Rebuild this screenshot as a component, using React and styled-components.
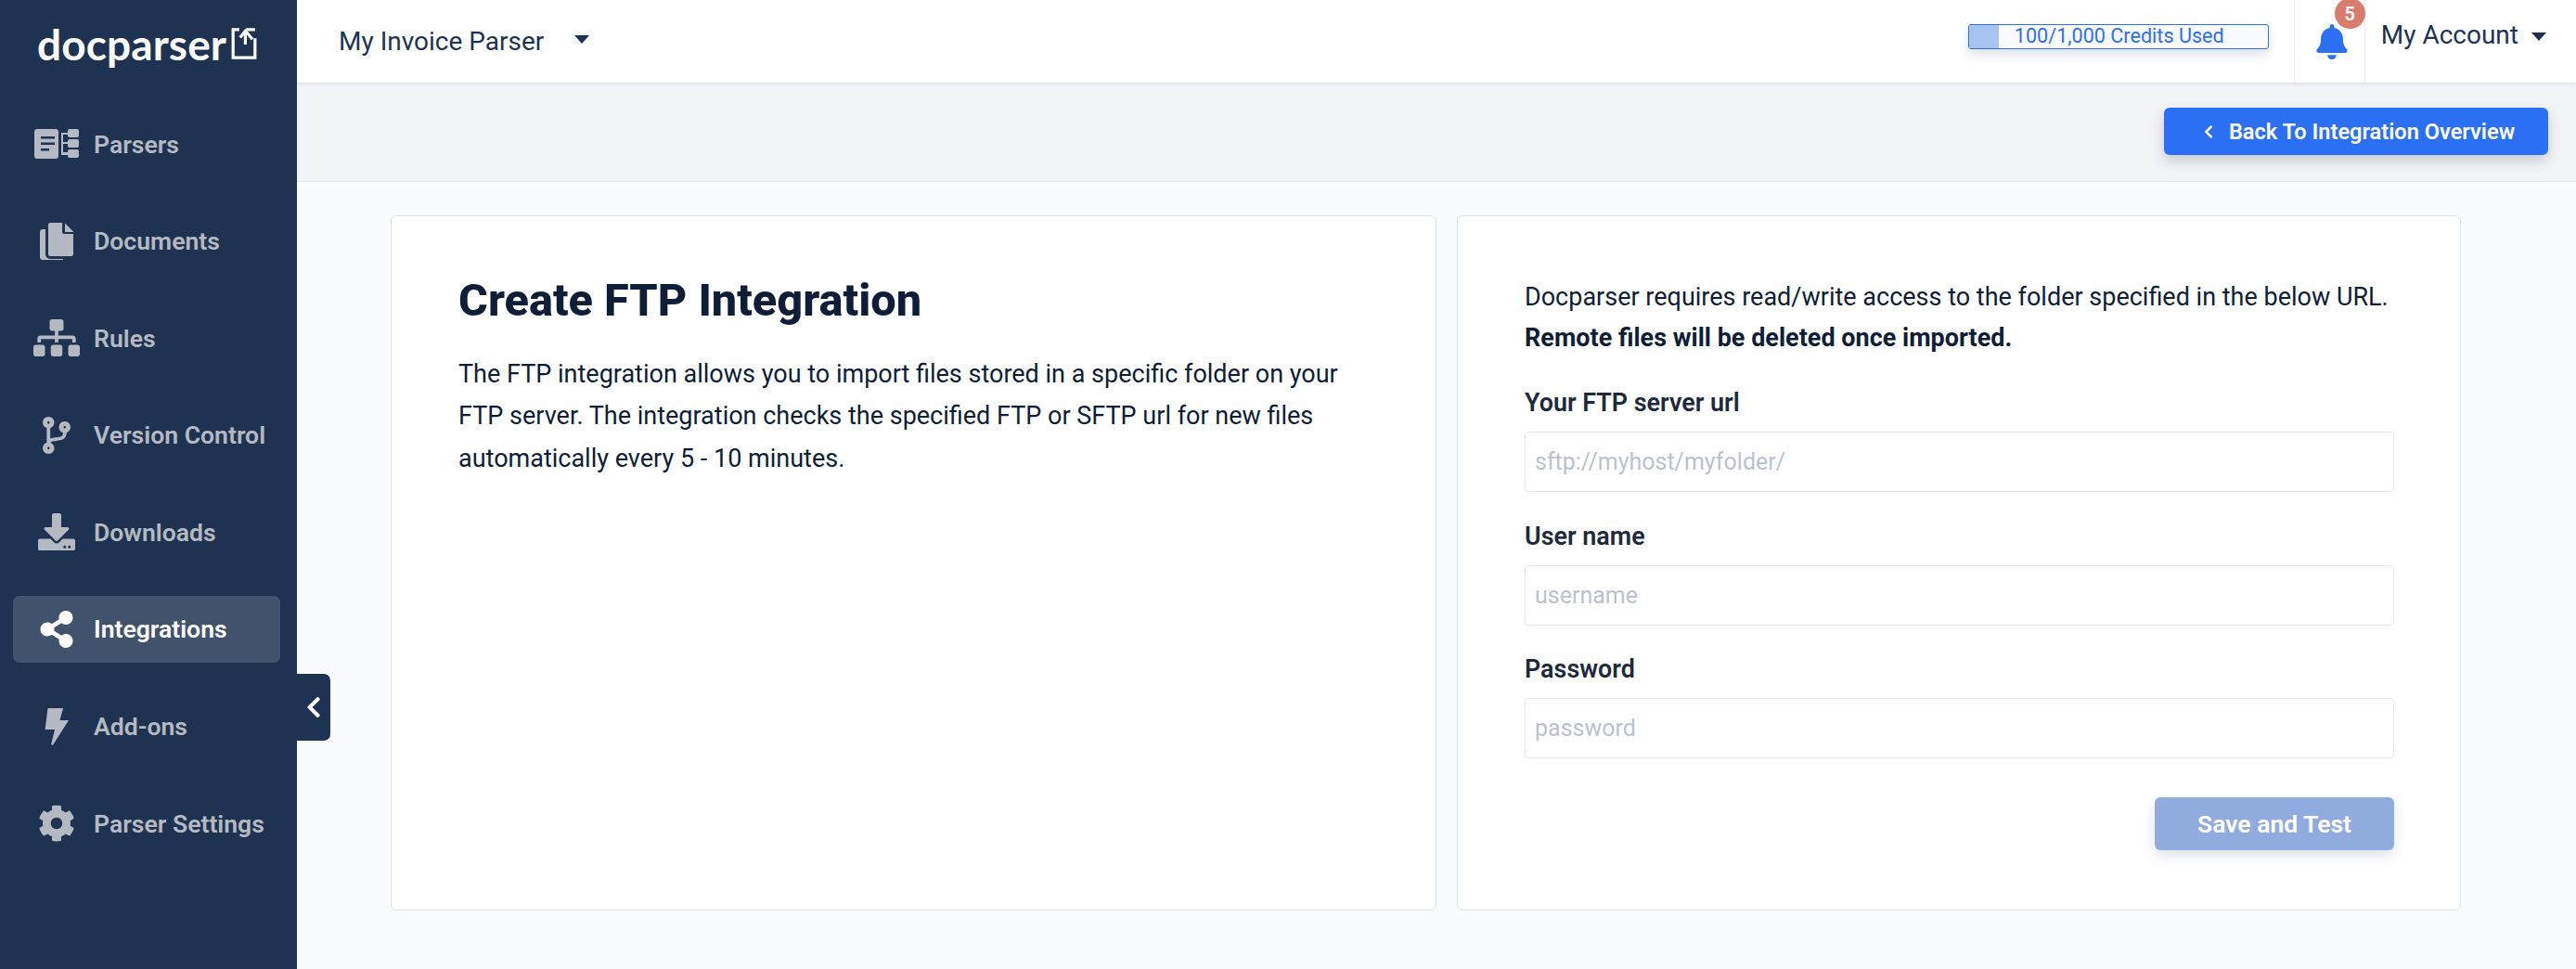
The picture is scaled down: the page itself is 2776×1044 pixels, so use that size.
import React from "react";
import styled, { createGlobalStyle } from "styled-components";
import {
  FaBell,
  FaChevronLeft,
  FaCodeBranch,
  FaCog,
  FaDownload,
  FaShareAlt,
  FaSitemap,
} from "react-icons/fa";

const GlobalStyle = createGlobalStyle`
  html, body {
    margin: 0;
    padding: 0;
    background: #fafbff;
    font-family: Roboto, "Liberation Sans", sans-serif;
    color: #0f1d36;
  }
  * { box-sizing: border-box; }
`;

const Page = styled.div`
  display: grid;
  grid-template-columns: 320px 1fr;
  width: 2776px;
  height: 1044px;
  overflow: hidden;
`;

const Sidebar = styled.aside`
  position: relative;
  background: #1e3352;
  display: flex;
  flex-direction: column;
  height: 1044px;
`;

const Brand = styled.div`
  height: 119px;
  display: flex;
  align-items: flex-start;
  padding: 18px 0 0 40px;
  gap: 5px;
  color: #fff;
`;

const BrandName = styled.span`
  font-family: Lato, sans-serif;
  font-size: 46px;
  line-height: 60px;
  font-weight: 700;
  letter-spacing: 0.1px;
`;

const BrandMark = styled.svg`
  width: 28px;
  height: 34px;
  margin-top: 12px;
  flex: none;
`;

const Nav = styled.nav`
  display: flex;
  flex-direction: column;
  gap: 32.6px;
  padding: 0 18px 0 14px;
`;

const NavItem = styled.a`
  height: 72px;
  display: flex;
  align-items: center;
  gap: 15px;
  padding-left: 22px;
  border-radius: 7px;
  font-size: 26.6px;
  font-weight: 600;
  color: ${(p) => (p.$active ? "#ffffff" : "#b4b9c2")};
  background: ${(p) => (p.$active ? "#41526d" : "transparent")};
`;

const NavIcon = styled.span`
  width: 50px;
  height: 44px;
  display: flex;
  align-items: center;
  justify-content: center;
  font-size: ${(p) => p.$size || 40}px;
  flex: none;
`;

const CollapseTab = styled.button`
  position: absolute;
  left: 320px;
  top: 726px;
  width: 36px;
  height: 72px;
  border: 0;
  padding: 0;
  background: #1e3352;
  color: #fff;
  border-radius: 0 7px 7px 0;
  display: flex;
  align-items: center;
  justify-content: center;
  font-size: 26px;
`;

const Main = styled.main`
  display: flex;
  flex-direction: column;
  min-width: 0;
`;

const TopBar = styled.header`
  position: relative;
  z-index: 1;
  height: 89px;
  flex: none;
  background: #fff;
  box-shadow: 0 1px 4px rgba(30, 51, 82, 0.14);
  display: flex;
  align-items: stretch;
  padding: 0 32px 0 45px;
`;

const ParserSelect = styled.div`
  display: flex;
  align-items: center;
  gap: 33px;
  font-size: 28px;
  color: #1e3352;
`;

const Caret = styled.span`
  width: 0;
  height: 0;
  border-left: 8.5px solid transparent;
  border-right: 8.5px solid transparent;
  border-top: 9px solid #1e3352;
  margin-top: -4px;
`;

const AccountCaret = styled(Caret)`
  margin-top: 3px;
`;

const TopRight = styled.div`
  margin-left: auto;
  display: flex;
  align-items: stretch;
`;

const Credits = styled.div`
  position: relative;
  align-self: center;
  width: 324px;
  height: 27px;
  margin: -11px 27px 0 0;
  border: 1px solid #2b6ff5;
  border-radius: 3px;
  background: #fafbff;
  box-shadow: 0 6px 12px rgba(30, 51, 82, 0.14);
  color: #2b6ff5;
  font-size: 21.6px;
  line-height: 24px;
  text-align: center;
  overflow: hidden;
`;

const CreditsFill = styled.div`
  position: absolute;
  left: 0;
  top: 0;
  bottom: 0;
  background: #a6c4ef;
`;

const CreditsLabel = styled.span`
  position: relative;
  left: 1px;
`;

const BellCell = styled.div`
  position: relative;
  width: 77px;
  border-left: 1px solid #e9ebef;
  border-right: 1px solid #e9ebef;
  display: flex;
  align-items: center;
  justify-content: center;
  color: #2b6ff5;
  font-size: 38px;
  padding: 0 0 0 6px;
`;

const Badge = styled.span`
  position: absolute;
  left: 43px;
  top: -2px;
  width: 33px;
  height: 33px;
  border-radius: 50%;
  background: #d87c6d;
  color: #fff;
  font-size: 20px;
  font-weight: 600;
  display: flex;
  align-items: center;
  justify-content: center;
`;

const Account = styled.div`
  display: flex;
  align-items: center;
  gap: 14px;
  padding: 0 0 14px 17px;
  font-size: 28px;
  color: #1e3352;
`;

const SubHeader = styled.div`
  height: 107px;
  flex: none;
  background: #f3f4f8;
  border-bottom: 1px solid #e2e3e8;
  display: flex;
  align-items: flex-start;
  justify-content: flex-end;
  padding: 27px 30px 0 0;
`;

const BackButton = styled.button`
  height: 51px;
  width: 414px;
  border: 0;
  border-radius: 6px;
  background: #2b6ff5;
  color: #fff;
  font: 600 23.6px Roboto, sans-serif;
  box-shadow: 0 6px 14px rgba(30, 51, 82, 0.22);
  display: flex;
  align-items: center;
  justify-content: center;
  gap: 14px;
  padding: 0 0 0 4px;
`;

const BackIcon = styled(FaChevronLeft)`
  font-size: 16px;
`;

const Content = styled.div`
  display: grid;
  grid-template-columns: 1127px 1082px;
  gap: 22px;
  padding: 36px 0 0 101px;
`;

const Card = styled.section`
  height: 749px;
  background: #fff;
  border: 1px solid #dfe1ea;
  border-radius: 6px;
  padding: ${(p) => p.$padding};
`;

const Title = styled.h1`
  margin: 0 0 28px;
  font-size: 48.7px;
  line-height: 58px;
  font-weight: 800;
  color: #0f1d36;
`;

const Body = styled.p`
  margin: 0;
  font-size: 27px;
  line-height: 45.3px;
  color: #0f1d36;
`;

const Intro = styled.p`
  margin: 0 0 31px;
  font-size: 27px;
  line-height: 44px;
  color: #0f1d36;
`;

const Field = styled.div`
  margin-bottom: 30.5px;
`;

const Label = styled.label`
  display: block;
  font-size: 26.9px;
  line-height: 34px;
  font-weight: 600;
  color: #1e2a3c;
  margin-bottom: 14px;
`;

const Input = styled.input`
  display: block;
  width: 100%;
  height: 65px;
  border: 1px solid #e8e9f0;
  border-radius: 4px;
  padding: 0 10px;
  background: #fff;
  font: 400 25px Roboto, sans-serif;
  &::placeholder {
    color: #bcc1d0;
    opacity: 1;
  }
`;

const Actions = styled.div`
  display: flex;
  justify-content: flex-end;
  margin-top: 42px;
`;

const SaveButton = styled.button`
  width: 258px;
  height: 57px;
  border: 0;
  border-radius: 6px;
  background: #90acdf;
  color: #fff;
  font: 600 26.5px Roboto, sans-serif;
  box-shadow: 0 6px 14px rgba(30, 51, 82, 0.14);
`;

const ParsersIcon = () => (
  <svg width="48" height="32" viewBox="0 0 48 32" fill="currentColor">
    <path
      fillRule="evenodd"
      d="M3 0h20a3 3 0 0 1 3 3v26a3 3 0 0 1-3 3H3a3 3 0 0 1-3-3V3a3 3 0 0 1 3-3Zm4 8v2.5h15V8Zm0 6.5V17h15v-2.5Zm0 6.5v2.5h9V21Z"
    />
    <path d="M38 0h8a2 2 0 0 1 2 2v5a2 2 0 0 1-2 2h-8a2 2 0 0 1-2-2V6h-5v8h5v-1a2 2 0 0 1 2-2h8a2 2 0 0 1 2 2v5a2 2 0 0 1-2 2h-8a2 2 0 0 1-2-2v-2h-5v9h5v-1a2 2 0 0 1 2-2h8a2 2 0 0 1 2 2v5a2 2 0 0 1-2 2h-8a2 2 0 0 1-2-2v-1h-7V4h7V2a2 2 0 0 1 2-2Z" />
  </svg>
);

const DocumentsIcon = () => (
  <svg width="36" height="40" viewBox="0 0 36 40" fill="currentColor">
    <path d="M11 0h13v10a2 2 0 0 0 2 2h10v22a2 2 0 0 1-2 2H11a2 2 0 0 1-2-2V2a2 2 0 0 1 2-2Z" />
    <path d="M27 0.5 35.5 9a1 1 0 0 1 .5 1h-9Z" />
    <path d="M6 7v27a5 5 0 0 0 5 5h14v1H3a3 3 0 0 1-3-3V10a3 3 0 0 1 3-3Z" />
  </svg>
);

const BoltIcon = () => (
  <svg width="26" height="40" viewBox="0 0 26 40" fill="currentColor">
    <path d="M3.5 0H20l-3.5 13H26L9.5 39c-.7 1.2-2.5.7-2.2-.8L11 23H.6Z" />
  </svg>
);

const navItems = [
  { label: "Parsers", icon: <ParsersIcon /> },
  { label: "Documents", icon: <DocumentsIcon /> },
  { label: "Rules", icon: <FaSitemap />, size: 50 },
  { label: "Version Control", icon: <FaCodeBranch />, size: 40 },
  { label: "Downloads", icon: <FaDownload />, size: 40 },
  { label: "Integrations", icon: <FaShareAlt />, size: 40, active: true },
  { label: "Add-ons", icon: <BoltIcon /> },
  { label: "Parser Settings", icon: <FaCog />, size: 40 },
];

const fields = [
  { label: "Your FTP server url", placeholder: "sftp://myhost/myfolder/" },
  { label: "User name", placeholder: "username" },
  { label: "Password", placeholder: "password" },
];

export default function App() {
  return (
    <Page>
      <GlobalStyle />
      <Sidebar>
        <Brand>
          <BrandName>docparser</BrandName>
          <BrandMark viewBox="0 0 29 36" fill="none" stroke="#fff" strokeWidth="3.4">
            <path d="M9 2H2v32h25V12M17 2h10" />
            <path d="M24 13 16 3.5l-6 7.5M16 4v15" />
          </BrandMark>
        </Brand>
        <Nav>
          {navItems.map((item) => (
            <NavItem key={item.label} $active={item.active}>
              <NavIcon $size={item.size}>{item.icon}</NavIcon>
              {item.label}
            </NavItem>
          ))}
        </Nav>
        <CollapseTab>
          <FaChevronLeft />
        </CollapseTab>
      </Sidebar>
      <Main>
        <TopBar>
          <ParserSelect>
            My Invoice Parser
            <Caret />
          </ParserSelect>
          <TopRight>
            <Credits>
              <CreditsFill style={{ width: `${(100 / 1000) * 100}%` }} />
              <CreditsLabel>100/1,000 Credits Used</CreditsLabel>
            </Credits>
            <BellCell>
              <FaBell />
              <Badge>5</Badge>
            </BellCell>
            <Account>
              My Account
              <AccountCaret />
            </Account>
          </TopRight>
        </TopBar>
        <SubHeader>
          <BackButton>
            <BackIcon />
            Back To Integration Overview
          </BackButton>
        </SubHeader>
        <Content>
          <Card $padding="62px 90px 0 72px">
            <Title>Create FTP Integration</Title>
            <Body>
              The FTP integration allows you to import files stored in a specific folder on your
              FTP server. The integration checks the specified FTP or SFTP url for new files
              automatically every 5 - 10 minutes.
            </Body>
          </Card>
          <Card $padding="65px 71px 0 72px">
            <Intro>
              Docparser requires read/write access to the folder specified in the below URL.
              <br />
              <strong>Remote files will be deleted once imported.</strong>
            </Intro>
            {fields.map((field) => (
              <Field key={field.label}>
                <Label>{field.label}</Label>
                <Input placeholder={field.placeholder} />
              </Field>
            ))}
            <Actions>
              <SaveButton>Save and Test</SaveButton>
            </Actions>
          </Card>
        </Content>
      </Main>
    </Page>
  );
}
